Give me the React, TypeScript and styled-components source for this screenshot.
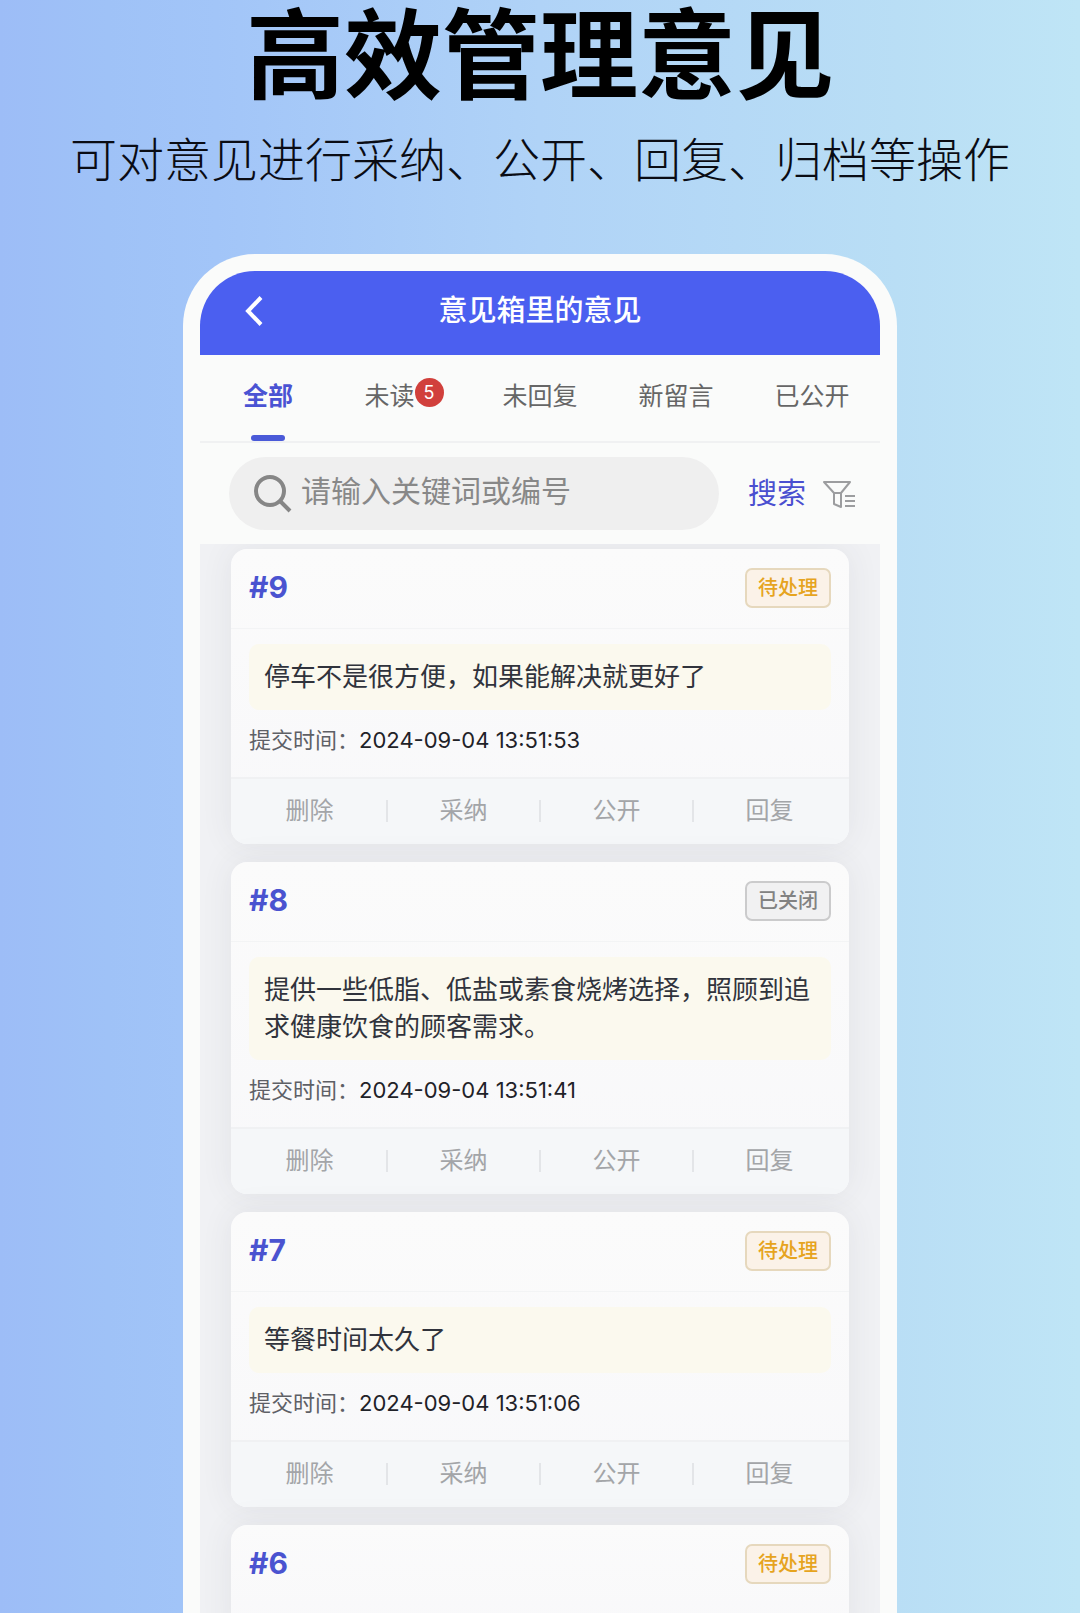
import React, { useState } from "react";
import styled, { createGlobalStyle, css } from "styled-components";

const GlobalStyle = createGlobalStyle`
  * { box-sizing: border-box; }
  body {
    margin: 0;
    font-family: Inter, "Noto Sans CJK SC", sans-serif;
    color: #24272e;
  }
  button, input {
    font: inherit;
    color: inherit;
    border: 0;
    padding: 0;
    margin: 0;
    background: none;
  }
  button { cursor: pointer; }
`;

const Poster = styled.div`
  height: 100vh;
  overflow: hidden;
  display: flex;
  flex-direction: column;
  align-items: center;
  background: linear-gradient(90deg, #9dbdf7 0%, #9fc2f7 10%, #a2c5f8 20%, #b0d3f7 50%, #b9def5 83%, #bfe5f6 100%);
`;

const Headline = styled.h1`
  margin: 0;
  font-family: Roboto, "Noto Sans CJK SC", sans-serif;
  font-size: 98px;
  line-height: 116px;
  font-weight: 700;
  color: #000;
  text-align: center;
`;

const Subtitle = styled.p`
  margin: 12px 0 62px;
  font-size: 47px;
  line-height: 64px;
  font-weight: 300;
  color: #0a0c14;
  text-align: center;
`;

const Phone = styled.main`
  flex: 1;
  min-height: 0;
  width: 100%;
  max-width: 714px;
  display: flex;
  flex-direction: column;
  padding: 17px 17px 0;
  border-radius: 72px 72px 0 0;
  background: #fafbfa;
`;

const TitleBar = styled.header`
  flex: none;
  display: grid;
  grid-template-columns: 68px 1fr 68px;
  align-items: center;
  height: 84px;
  padding: 0 20px 4px;
  border-radius: 55px 55px 0 0;
  background: #4b5ff0;
  color: #fff;
`;

const BackButton = styled.button`
  display: flex;
  justify-content: center;
  align-items: center;
  height: 48px;
`;

const ScreenTitle = styled.h2`
  margin: 0;
  font-size: 29px;
  line-height: 40px;
  font-weight: 500;
  text-align: center;
`;

const Tabs = styled.nav`
  flex: none;
  display: grid;
  grid-template-columns: repeat(5, 1fr);
  height: 88px;
  border-bottom: 2px solid #f0f1f2;
`;

const Tab = styled.button<{ $active: boolean }>`
  position: relative;
  display: flex;
  justify-content: center;
  align-items: center;
  padding-bottom: 4px;
  font-size: 25px;
  line-height: 36px;
  color: #666;
  ${(p) =>
    p.$active &&
    css`
      color: #4a53d3;
      font-weight: 700;
      &::after {
        content: "";
        position: absolute;
        left: calc(50% - 17px);
        bottom: 0;
        width: 34px;
        height: 6px;
        border-radius: 3px;
        background: #4a5ad8;
      }
    `}
`;

const Count = styled.span`
  width: 29px;
  height: 29px;
  margin-bottom: 8px;
  border-radius: 50%;
  background: #d1403c;
  color: #fff;
  font-size: 18px;
  line-height: 29px;
  text-align: center;
`;

const SearchRow = styled.form`
  flex: none;
  display: flex;
  align-items: center;
  padding: 14px 24px 14px 29px;
`;

const SearchBox = styled.label`
  flex: 1;
  min-width: 0;
  display: flex;
  align-items: center;
  gap: 8px;
  height: 73px;
  padding: 0 24px;
  border-radius: 37px;
  background: #efefef;
`;

const SearchInput = styled.input`
  flex: 1;
  min-width: 0;
  height: 50px;
  padding-bottom: 5px;
  font-size: 30px;
  outline: none;
  &::placeholder {
    color: #888;
    opacity: 1;
  }
`;

const SearchButton = styled.button`
  margin-left: 29px;
  font-size: 29px;
  line-height: 40px;
  color: #4a4fd0;
`;

const FilterButton = styled.button`
  display: flex;
  margin-left: 16px;
`;

const List = styled.section`
  flex: 1;
  min-height: 0;
  overflow: hidden;
  display: flex;
  flex-direction: column;
  gap: 18px;
  padding: 5px 31px 0;
  background: #f0f1f4;
`;

const Card = styled.article`
  flex: none;
  border-radius: 16px;
  background: linear-gradient(180deg, #fbfbfb, #f8f8fa);
  box-shadow: 0 0 32px rgba(60, 70, 80, 0.08);
  overflow: hidden;
`;

const CardHead = styled.div<{ $divided: boolean }>`
  display: flex;
  align-items: center;
  justify-content: space-between;
  height: 80px;
  padding: 0 18px 2px;
  border-bottom: 1px solid ${(p) => (p.$divided ? "#f3f4f5" : "transparent")};
`;

const CardId = styled.h3`
  margin: 0;
  padding-bottom: 2px;
  font-size: 30px;
  line-height: 40px;
  font-weight: 700;
  color: #4a53d0;
`;

const Status = styled.span<{ $closed: boolean }>`
  height: 40px;
  padding: 0 11px;
  border: 2px solid ${(p) => (p.$closed ? "#cbcbcc" : "#e6d8bd")};
  border-radius: 7px;
  background: ${(p) => (p.$closed ? "#f1f1f2" : "#fbf2e8")};
  color: ${(p) => (p.$closed ? "#828282" : "#e6a41f")};
  font-size: 20px;
  line-height: 36px;
  font-weight: 500;
`;

const CardBody = styled.div`
  padding: 15px 18px 21px;
`;

const Message = styled.p`
  margin: 0;
  padding: 14px 15px 15px;
  border-radius: 10px;
  background: #fbf9ee;
  font-size: 26px;
  line-height: 37px;
  color: #30333c;
`;

const Submitted = styled.p`
  margin: 14px 0 0;
  font-size: 22px;
  line-height: 32px;
  color: #5e6066;
`;

const Time = styled.time`
  color: #1f2228;
`;

const Actions = styled.footer`
  display: grid;
  grid-template-columns: repeat(4, 1fr);
  align-items: center;
  height: 67px;
  padding: 0 4px 2px 2px;
  border-top: 2px solid #f0f1f3;
  background: #f5f7f9;
`;

const Action = styled.button`
  display: flex;
  justify-content: center;
  font-size: 24px;
  line-height: 22px;
  color: #a3a5a8;
  & + & {
    border-left: 2px solid #e3e5e8;
  }
`;

type Opinion = { id: number; closed?: boolean; text?: string; time?: string };

const opinions: Opinion[] = [
  { id: 9, text: "停车不是很方便，如果能解决就更好了", time: "2024-09-04 13:51:53" },
  {
    id: 8,
    closed: true,
    text: "提供一些低脂、低盐或素食烧烤选择，照顾到追求健康饮食的顾客需求。",
    time: "2024-09-04 13:51:41",
  },
  { id: 7, text: "等餐时间太久了", time: "2024-09-04 13:51:06" },
  { id: 6 },
];

const tabs = [
  { label: "全部" },
  { label: "未读", count: 5 },
  { label: "未回复" },
  { label: "新留言" },
  { label: "已公开" },
];

const actions = ["删除", "采纳", "公开", "回复"];

const BackIcon = () => (
  <svg width="18" height="30" viewBox="0 0 18 30" fill="none" stroke="#fff" strokeWidth="4" aria-hidden="true">
    <path d="M16 1.5 3 15l13 13.5" />
  </svg>
);

const SearchIcon = () => (
  <svg width="40" height="40" viewBox="0 0 40 40" fill="none" stroke="#868686" strokeWidth="4" aria-hidden="true">
    <circle cx="17" cy="17" r="14" />
    <path d="m27 27 10 10" />
  </svg>
);

const FilterIcon = () => (
  <svg width="34" height="30" viewBox="0 0 34 30" fill="none" stroke="#9c9d9f" strokeWidth="2" aria-hidden="true">
    <path d="M2 3h26l-9 11v14l-7-3V14z M12 14h7" strokeLinejoin="round" />
    <path d="M23 17h10M23 22h10M23 27h10" />
  </svg>
);

function OpinionCard({ id, closed = false, text, time }: Opinion) {
  return (
    <Card>
      <CardHead $divided={Boolean(text)}>
        <CardId>#{id}</CardId>
        <Status $closed={closed}>{closed ? "已关闭" : "待处理"}</Status>
      </CardHead>
      <CardBody>
        {text && <Message>{text}</Message>}
        {time && (
          <Submitted>
            提交时间：<Time>{time}</Time>
          </Submitted>
        )}
      </CardBody>
      {text && (
        <Actions>
          {actions.map((a) => (
            <Action key={a} type="button">
              {a}
            </Action>
          ))}
        </Actions>
      )}
    </Card>
  );
}

export default function App() {
  const [active, setActive] = useState(0);
  return (
    <>
      <GlobalStyle />
      <Poster>
        <Headline>高效管理意见</Headline>
        <Subtitle>可对意见进行采纳、公开、回复、归档等操作</Subtitle>
        <Phone>
          <TitleBar>
            <BackButton type="button" aria-label="返回">
              <BackIcon />
            </BackButton>
            <ScreenTitle>意见箱里的意见</ScreenTitle>
          </TitleBar>
          <Tabs>
            {tabs.map((t, i) => (
              <Tab key={t.label} type="button" $active={i === active} onClick={() => setActive(i)}>
                {t.label}
                {t.count && <Count>{t.count}</Count>}
              </Tab>
            ))}
          </Tabs>
          <SearchRow onSubmit={(e) => e.preventDefault()}>
            <SearchBox>
              <SearchIcon />
              <SearchInput type="text" aria-label="关键词或编号" placeholder="请输入关键词或编号" />
            </SearchBox>
            <SearchButton type="submit">搜索</SearchButton>
            <FilterButton type="button" aria-label="筛选">
              <FilterIcon />
            </FilterButton>
          </SearchRow>
          <List>
            {opinions.map((o) => (
              <OpinionCard key={o.id} {...o} />
            ))}
          </List>
        </Phone>
      </Poster>
    </>
  );
}
